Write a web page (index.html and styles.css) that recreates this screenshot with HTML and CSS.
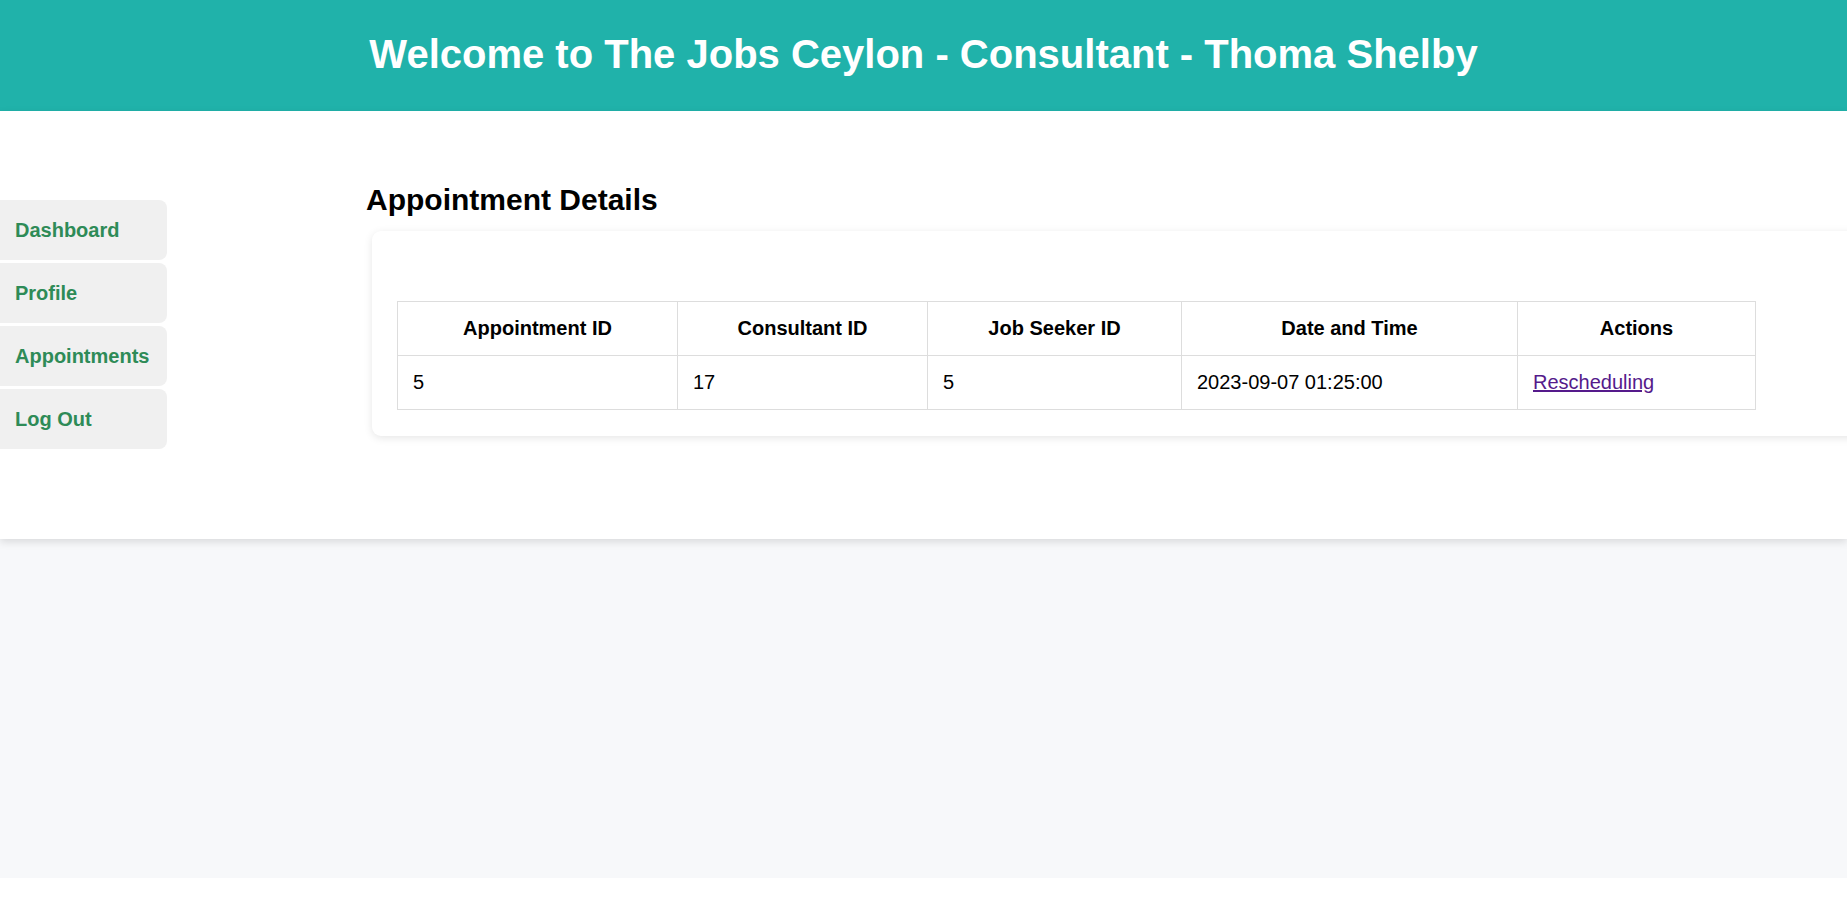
FILE: index.html
```html
<!DOCTYPE html>
<html lang="en">
<head>
<meta charset="utf-8">
<title>The Jobs Ceylon - Consultant</title>
<link rel="stylesheet" href="styles.css">
</head>
<body>
<div class="page">
  <header class="topbar">
    <h1 class="topbar-title">Welcome to The Jobs Ceylon - Consultant - Thoma Shelby</h1>
  </header>
  <main class="main">
    <nav class="sidebar">
      <a class="nav-item" href="#">Dashboard</a>
      <a class="nav-item" href="#">Profile</a>
      <a class="nav-item" href="#">Appointments</a>
      <a class="nav-item" href="#">Log Out</a>
    </nav>
    <section class="content">
      <h2 class="section-title">Appointment Details</h2>
      <div class="card">
        <table class="data-table">
          <colgroup>
            <col class="c1"><col class="c2"><col class="c3"><col class="c4"><col class="c5">
          </colgroup>
          <thead>
            <tr>
              <th>Appointment ID</th>
              <th>Consultant ID</th>
              <th>Job Seeker ID</th>
              <th>Date and Time</th>
              <th>Actions</th>
            </tr>
          </thead>
          <tbody>
            <tr>
              <td>5</td>
              <td>17</td>
              <td>5</td>
              <td>2023-09-07 01:25:00</td>
              <td><a class="action-link" href="#">Rescheduling</a></td>
            </tr>
          </tbody>
        </table>
      </div>
    </section>
  </main>
</div>
</body>
</html>
```

FILE: styles.css
```css
html {
  background: #ffffff;
}

body {
  margin: 0;
  font-family: "Liberation Sans", Arial, sans-serif;
  color: #000;
  overflow-x: hidden;
}

.page {
  background: #f7f8fa;
  min-height: 878px;
}

.topbar {
  background: #20b2aa;
  height: 111px;
  box-sizing: border-box;
  padding-top: 31px;
  text-align: center;
}

.topbar-title {
  margin: 0;
  color: #ffffff;
  font-size: 40px;
  line-height: 46px;
  font-weight: bold;
}

.main {
  background: #ffffff;
  min-height: 428px;
  box-sizing: border-box;
  display: flex;
  align-items: flex-start;
  box-shadow: 0 3px 8px rgba(0, 0, 0, 0.12);
}

.sidebar {
  width: 167px;
  flex: 0 0 167px;
  margin-top: 89px;
  display: flex;
  flex-direction: column;
  gap: 3px;
}

.nav-item {
  height: 60px;
  box-sizing: border-box;
  display: flex;
  align-items: center;
  padding-left: 15px;
  background: #f0f0f0;
  border-radius: 0 8px 8px 0;
  color: #2e8b57;
  font-size: 20px;
  font-weight: bold;
  text-decoration: none;
}

.content {
  flex: 1;
  margin-left: 199px;
  padding-top: 71px;
  min-width: 0;
}

.section-title {
  margin: 0;
  font-size: 30px;
  line-height: 35px;
  font-weight: bold;
}

.card {
  margin: 14px 0 0 6px;
  width: 1500px;
  box-sizing: border-box;
  padding: 70px 25px 26px 25px;
  background: #ffffff;
  border-radius: 9px;
  box-shadow: 0 2px 8px rgba(0, 0, 0, 0.1);
}

.data-table {
  border-collapse: collapse;
  table-layout: fixed;
  width: 1358px;
  font-size: 20px;
}

.c1 { width: 280px; }
.c2 { width: 250px; }
.c3 { width: 254px; }
.c4 { width: 336px; }
.c5 { width: 238px; }

.data-table th,
.data-table td {
  border: 1px solid #dddddd;
  padding: 15px;
  line-height: 23px;
}

.data-table th {
  text-align: center;
  font-weight: bold;
}

.data-table td {
  text-align: left;
}

.action-link {
  color: #551a8b;
  text-decoration: underline;
}
```
